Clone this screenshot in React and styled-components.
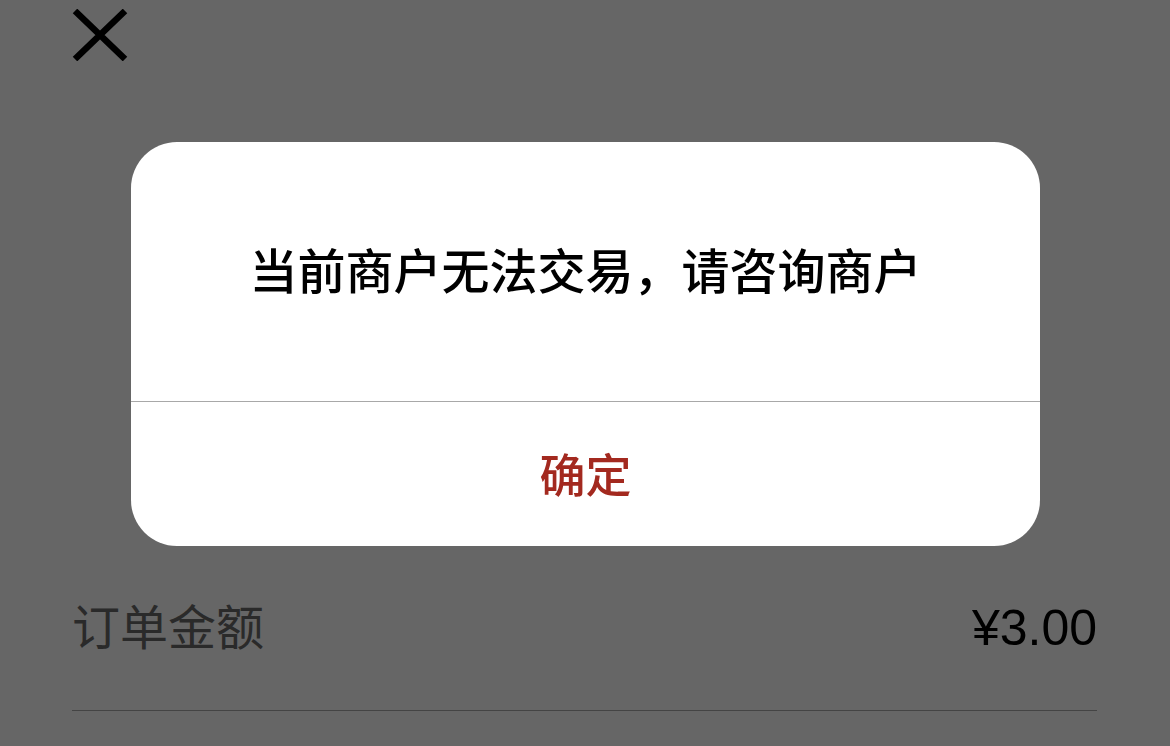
import React from 'react'
import styled, { createGlobalStyle } from 'styled-components'

const Global = createGlobalStyle`
  html, body {
    margin: 0;
    padding: 0;
  }
  body {
    width: 1170px;
    height: 746px;
    overflow: hidden;
    background: #666666;
    font-family: "Noto Sans CJK SC", "Noto Sans", sans-serif;
  }
`

const App = () => {
  return (
    <>
      <Global />
      <Page>
        <Top>
          <Close aria-label="关闭">
            <svg width="56" height="52" viewBox="0 0 56 52">
              <path d="M3 2 L53 50 M53 2 L3 50" stroke="#000" strokeWidth="6.5" strokeLinecap="butt" fill="none" />
            </svg>
          </Close>
        </Top>
        <Content>
          <Row>
            <Label>订单金额</Label>
            <Amount>¥3.00</Amount>
          </Row>
        </Content>
      </Page>
      <Overlay>
        <Dialog>
          <Message>当前商户无法交易，请咨询商户</Message>
          <Confirm>确定</Confirm>
        </Dialog>
      </Overlay>
    </>
  )
}

export default App

const Page = styled.div`
  width: 1170px;
  height: 746px;
  padding: 0 73px 0 72px;
  box-sizing: border-box;
  display: flex;
  flex-direction: column;
`
const Top = styled.div`
  height: 62px;
  display: flex;
  align-items: center;
`
const Close = styled.button`
  border: none;
  background: none;
  padding: 0;
  margin-top: 8px;
  width: 56px;
  height: 52px;
  display: flex;
  cursor: pointer;
`
const Content = styled.div`
  padding-top: 527px;
`
const Row = styled.div`
  height: 122px;
  display: flex;
  align-items: flex-start;
  justify-content: space-between;
  border-bottom: 1px solid #444;
  box-sizing: border-box;
`
const Label = styled.div`
  font-size: 48px;
  line-height: 70px;
  color: #2a2a2a;
`
const Amount = styled.div`
  font-family: "Liberation Sans", Arial, sans-serif;
  font-size: 50px;
  line-height: 70px;
  padding-top: 4px;
  color: #000;
`
const Overlay = styled.div`
  position: fixed;
  inset: 0;
  display: flex;
  justify-content: center;
  padding-top: 142px;
  box-sizing: border-box;
  padding-left: 1px;
`
const Dialog = styled.div`
  width: 909px;
  height: 404px;
  background: #fff;
  border-radius: 46px;
  display: flex;
  flex-direction: column;
  overflow: hidden;
`
const Message = styled.div`
  height: 260px;
  display: flex;
  align-items: center;
  justify-content: center;
  font-size: 48px;
  font-weight: 500;
  color: #000;
  border-bottom: 1px solid #a8a8a8;
  box-sizing: border-box;
  padding-bottom: 8px;
`
const Confirm = styled.div`
  flex: 1;
  display: flex;
  align-items: center;
  justify-content: center;
  font-size: 46px;
  font-weight: 500;
  color: #a3291f;
  padding-bottom: 4px;
  cursor: pointer;
`
